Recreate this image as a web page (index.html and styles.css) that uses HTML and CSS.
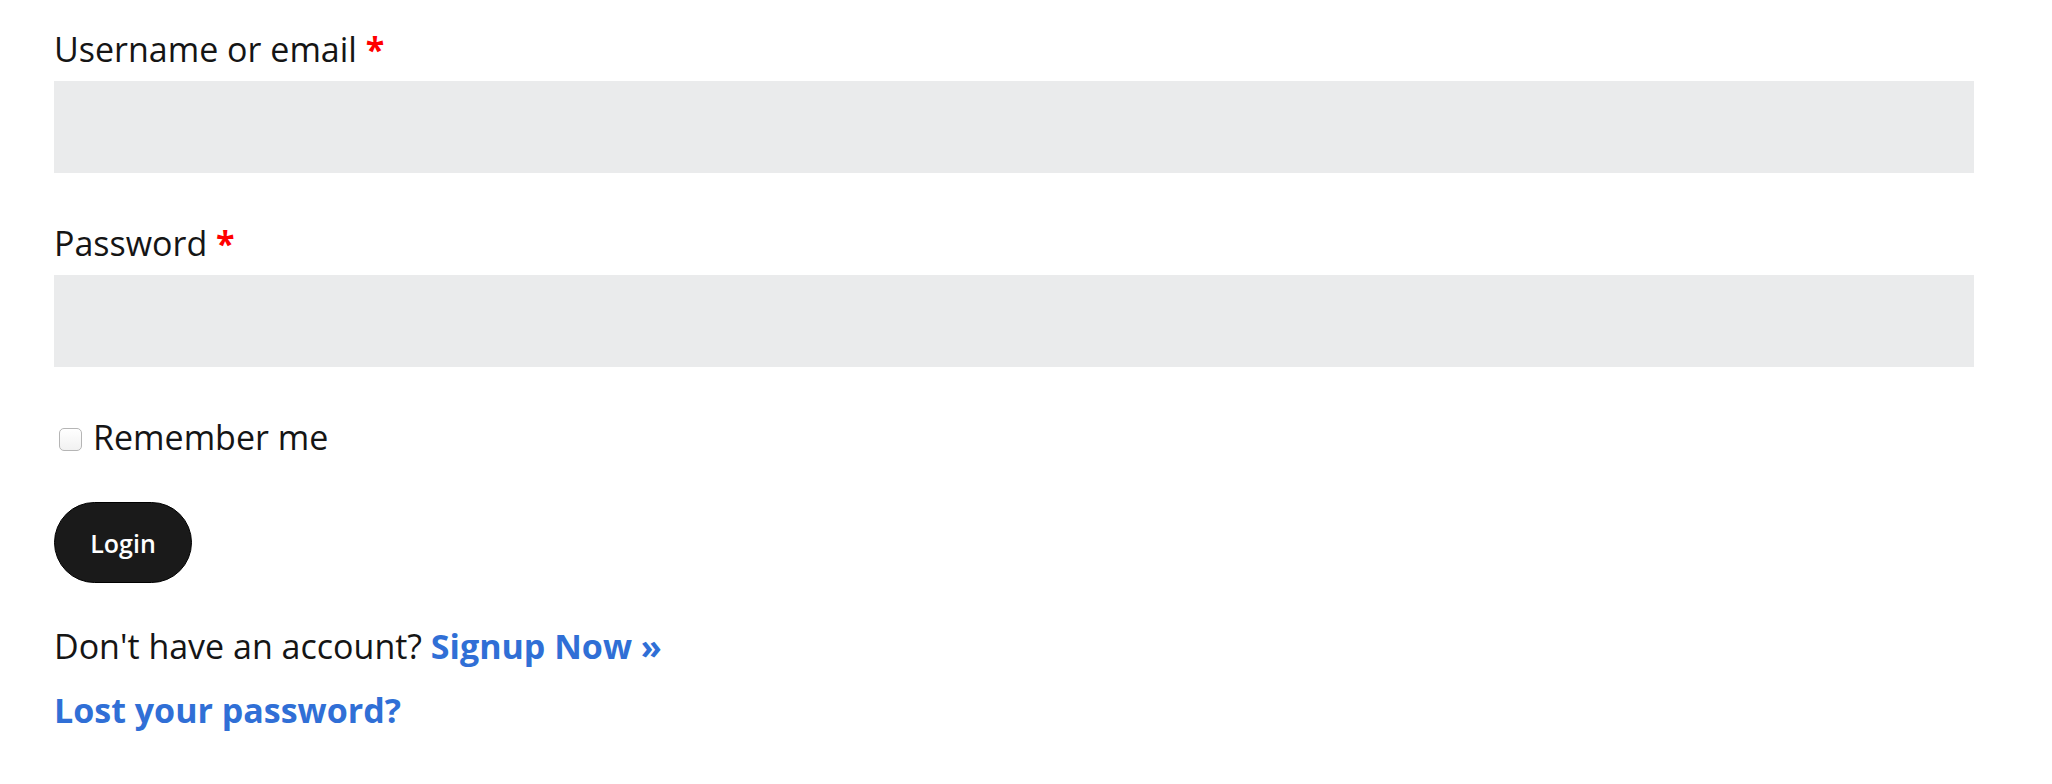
FILE: index.html
```html
<!DOCTYPE html>
<html lang="en">
<head>
<meta charset="utf-8">
<title>Login</title>
<link rel="stylesheet" href="styles.css">
</head>
<body>
<form class="login-form">
  <div class="field">
    <label class="field-label" for="user">Username or email <span class="req">*</span></label>
    <input class="text-input" id="user" type="text">
  </div>
  <div class="field">
    <label class="field-label" for="pass">Password <span class="req">*</span></label>
    <input class="text-input" id="pass" type="password">
  </div>
  <label class="remember"><input class="check" type="checkbox"><span>Remember me</span></label>
  <div class="actions">
    <button class="btn-login" type="button">Login</button>
  </div>
  <p class="note">Don't have an account? <a class="link" href="#">Signup Now »</a></p>
  <p class="note"><a class="link" href="#">Lost your password?</a></p>
</form>
</body>
</html>
```

FILE: styles.css
```css
html, body {
  margin: 0;
  padding: 0;
  background: #ffffff;
}

body {
  font-family: "Open Sans", "Liberation Sans", sans-serif;
  font-size: 34px;
  line-height: 48px;
  color: #151515;
}

.login-form {
  padding: 25px 78px 0 54px;
  display: flex;
  flex-direction: column;
}

.field {
  display: flex;
  flex-direction: column;
  margin-bottom: 46px;
}

.field-label {
  display: block;
  margin-bottom: 8px;
}

.req {
  color: #ff0000;
  font-weight: 700;
}

.text-input {
  display: block;
  box-sizing: border-box;
  width: 100%;
  height: 92px;
  border: 0;
  margin: 0;
  background: #eaebec;
  font: inherit;
}

.remember {
  display: flex;
  align-items: center;
  gap: 11px;
  padding-left: 5px;
}

.check {
  appearance: none;
  -webkit-appearance: none;
  box-sizing: border-box;
  width: 23px;
  height: 23px;
  margin: 4px 0 0 0;
  border: 1px solid #b5b5b5;
  border-radius: 5px;
  background: linear-gradient(#ffffff, #f1f1f1);
}

.actions {
  margin-top: 41px;
}

.btn-login {
  box-sizing: border-box;
  width: 138px;
  height: 81px;
  border: 1px solid #000;
  border-radius: 41px;
  background: #1a1a1a;
  color: #ffffff;
  font-family: "Open Sans", "Liberation Sans", sans-serif;
  font-size: 25px;
  font-weight: 600;
  padding: 0;
  cursor: pointer;
}

.note {
  margin: 39px 0 0 0;
}

.note + .note {
  margin-top: 16px;
}

.link {
  color: #306fd6;
  font-weight: 700;
  text-decoration: none;
}
```
